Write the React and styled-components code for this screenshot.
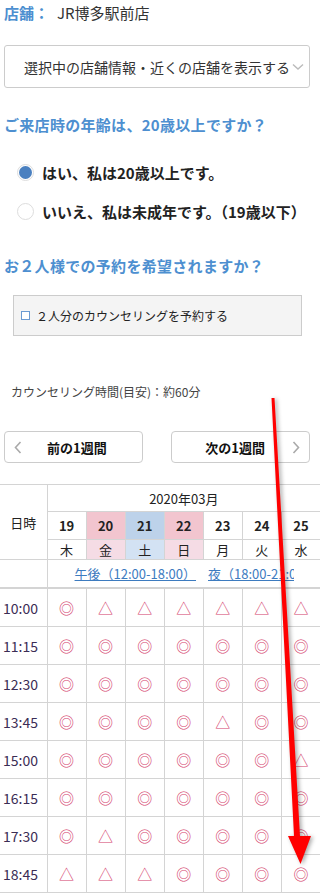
import styled, { createGlobalStyle } from "styled-components";

const GlobalStyle = createGlobalStyle`
  body {
    margin: 0;
    background: #fff;
    font-family: "Noto Sans CJK JP", "Noto Sans", sans-serif;
    color: #333;
  }
`;

const Page = styled.div`
  position: relative;
  width: 320px;
  height: 895px;
  overflow: hidden;
`;

const StoreLine = styled.div`
  padding: 0 4px;
  height: 26px;
  line-height: 26px;
  font-size: 15px;

  .label {
    color: #4d8fd0;
    font-weight: bold;
    margin-right: 8px;
  }
`;

const SelectBox = styled.div`
  margin: 19px 10px 0 4px;
  height: 41px;
  border: 1px solid #ccc;
  border-radius: 3px;
  display: flex;
  align-items: center;
  padding-left: 19px;
  font-size: 14px;
  color: #333;
  white-space: nowrap;
  overflow: hidden;

  svg {
    margin-left: 2px;
    flex-shrink: 0;
  }
`;

const Question = styled.h2`
  margin: ${(p) => p.$top}px 0 0;
  padding-left: 4px;
  font-size: 15px;
  line-height: 24px;
  color: #4d8fd0;
  font-weight: bold;
  letter-spacing: 0.3px;
`;

const RadioList = styled.div`
  margin-top: 23px;
  display: flex;
  flex-direction: column;
  gap: 15px;
`;

const RadioRow = styled.label`
  display: flex;
  align-items: center;
  padding-left: 17px;
  height: 24px;
  font-size: 15px;
  font-weight: bold;
  color: #222;
  white-space: nowrap;
`;

const RadioDot = styled.span`
  width: 17px;
  height: 17px;
  border-radius: 50%;
  border: 1px solid #ddd;
  box-sizing: border-box;
  margin-right: 8px;
  flex-shrink: 0;
  display: flex;
  align-items: center;
  justify-content: center;

  &::after {
    content: "";
    width: 13px;
    height: 13px;
    border-radius: 50%;
    background: ${(p) => (p.$checked ? "#4a80c0" : "transparent")};
  }
`;

const CheckBox = styled.div`
  margin: 17px 18px 0 13px;
  height: 39px;
  border: 1px solid #ccc;
  background: #f4f4f4;
  display: flex;
  align-items: center;
  padding-left: 7px;
  font-size: 12px;
  color: #222;

  .box {
    width: 7px;
    height: 7px;
    border: 1px solid #6b9bd2;
    background: #fff;
    margin-right: 6px;
  }
`;

const Duration = styled.div`
  margin-top: 46px;
  padding-left: 11px;
  font-size: 12px;
  color: #444;
  line-height: 20px;
`;

const WeekNav = styled.div`
  margin-top: 29px;
  padding: 0 10px 0 4px;
  display: flex;
  justify-content: space-between;
`;

const WeekButton = styled.button`
  width: 139px;
  height: 32px;
  border: 1px solid #ccc;
  border-radius: 4px;
  background: #fff;
  display: flex;
  align-items: center;
  justify-content: ${(p) => (p.$next ? "flex-end" : "flex-start")};
  padding: 0 9px;
  font-family: inherit;
  font-size: 13px;
  font-weight: bold;
  color: #111;

  .text {
    ${(p) => (p.$next ? "margin-right: 27px;" : "margin-left: 25px;")}
  }
`;

const Table = styled.table`
  margin-top: 21px;
  border-collapse: collapse;
  table-layout: fixed;
  width: 321px;
  font-size: 13px;
  color: #222;

  th,
  td {
    border: 1px solid #d4d4d4;
    padding: 0;
    text-align: center;
  }
  tr > :first-child {
    border-left: none;
  }
`;

const Th = styled.th`
  font-weight: normal;
  height: ${(p) => p.$h}px;
  background: ${(p) => p.$bg || "#fff"};
`;

const DayNum = styled.th`
  height: 27px;
  font-weight: bold;
  font-size: 13px;
  background: ${(p) =>
    p.$kind === "holiday" ? "#f2c5cf" : p.$kind === "sat" ? "#bdd2ea" : "#fff"};
`;

const WeekDay = styled.th`
  height: 19px;
  font-weight: normal;
  font-size: 13px;
  background: ${(p) =>
    p.$kind === "holiday" ? "#f5dce5" : p.$kind === "sat" ? "#d3e2f3" : "#fff"};
`;

const RangeCell = styled.th`
  height: 27px;
  font-weight: normal;
  text-align: left !important;
  font-size: 13px;

  .clip {
    width: 246px;
    overflow: hidden;
    white-space: nowrap;
  }

  a {
    color: #3d7bbf;
    text-decoration: underline;
    margin-left: 27px;
  }
  a + a {
    margin-left: 12px;
  }
`;

const TimeRow = styled.tr`
  td {
    height: 37px;
  }
  &:first-child td {
    border-top: 2px solid #d4d4d4;
  }
`;

const TimeCell = styled.td`
  font-size: 14px;
  color: #3b2d55;
  text-align: left !important;
  padding-left: 3px !important;
`;

const Mark = styled.td`
  font-size: 15px;
  color: #d4406c;
`;

const ArrowLayer = styled.svg`
  position: absolute;
  left: 0;
  top: 0;
  pointer-events: none;
  filter: drop-shadow(2px 1px 2px rgba(0, 0, 0, 0.35));
`;

const days = [
  { n: 19, w: "木" },
  { n: 20, w: "金", k: "holiday" },
  { n: 21, w: "土", k: "sat" },
  { n: 22, w: "日", k: "holiday" },
  { n: 23, w: "月" },
  { n: 24, w: "火" },
  { n: 25, w: "水" },
];

const slots = [
  ["10:00", "◎△△△△△△"],
  ["11:15", "◎◎◎◎◎◎◎"],
  ["12:30", "◎◎◎◎◎◎◎"],
  ["13:45", "◎◎◎◎△◎◎"],
  ["15:00", "◎◎◎◎◎◎△"],
  ["16:15", "◎◎◎◎◎◎◎"],
  ["17:30", "◎△◎◎◎◎◎"],
  ["18:45", "△△△◎◎◎◎"],
];

const Chevron = ({ dir }) => (
  <svg width="8" height="13" viewBox="0 0 8 13">
    <path
      d={dir === "left" ? "M6.5 1 L1.5 6.5 L6.5 12" : "M1.5 1 L6.5 6.5 L1.5 12"}
      fill="none"
      stroke="#aaa"
      strokeWidth="1.6"
    />
  </svg>
);

export default function App() {
  return (
    <Page>
      <GlobalStyle />
      <StoreLine>
        <span className="label">店舗：</span>JR博多駅前店
      </StoreLine>
      <SelectBox>
        選択中の店舗情報・近くの店舗を表示する
        <svg width="12" height="8" viewBox="0 0 12 8">
          <path d="M1 1.5 L6 6 L11 1.5" fill="none" stroke="#bbb" strokeWidth="1.4" />
        </svg>
      </SelectBox>

      <Question $top={25}>ご来店時の年齢は、20歳以上ですか？</Question>
      <RadioList>
        <RadioRow>
          <RadioDot $checked />
          はい、私は20歳以上です。
        </RadioRow>
        <RadioRow>
          <RadioDot />
          いいえ、私は未成年です。（19歳以下）
        </RadioRow>
      </RadioList>

      <Question $top={31}>お２人様での予約を希望されますか？</Question>
      <CheckBox>
        <span className="box" />
        ２人分のカウンセリングを予約する
      </CheckBox>

      <Duration>カウンセリング時間(目安)：約60分</Duration>

      <WeekNav>
        <WeekButton>
          <Chevron dir="left" />
          <span className="text">前の1週間</span>
        </WeekButton>
        <WeekButton $next>
          <span className="text">次の1週間</span>
          <Chevron dir="right" />
        </WeekButton>
      </WeekNav>

      <Table>
        <colgroup>
          <col style={{ width: 47 }} />
          {days.map((d) => (
            <col key={d.n} style={{ width: 39 }} />
          ))}
        </colgroup>
        <thead>
          <tr>
            <Th rowSpan={3}>日時</Th>
            <Th colSpan={7} $h={26}>
              2020年03月
            </Th>
          </tr>
          <tr>
            {days.map((d) => (
              <DayNum key={d.n} $kind={d.k}>
                {d.n}
              </DayNum>
            ))}
          </tr>
          <tr>
            {days.map((d) => (
              <WeekDay key={d.n} $kind={d.k}>
                {d.w}
              </WeekDay>
            ))}
          </tr>
          <tr>
            <Th $h={27} />
            <RangeCell colSpan={7}>
              <div className="clip">
                <a>午後（12:00-18:00）</a>
                <a>夜（18:00-21:00）</a>
              </div>
            </RangeCell>
          </tr>
        </thead>
        <tbody>
          {slots.map(([time, marks]) => (
            <TimeRow key={time}>
              <TimeCell>{time}</TimeCell>
              {[...marks].map((m, i) => (
                <Mark key={i}>{m}</Mark>
              ))}
            </TimeRow>
          ))}
        </tbody>
      </Table>

      <ArrowLayer width="320" height="895" viewBox="0 0 320 895">
        <polygon
          points="271.5,398 274.5,398 300,836 311,836 300.5,864 288,836 294,836"
          fill="#ff0000"
        />
      </ArrowLayer>
    </Page>
  );
}
